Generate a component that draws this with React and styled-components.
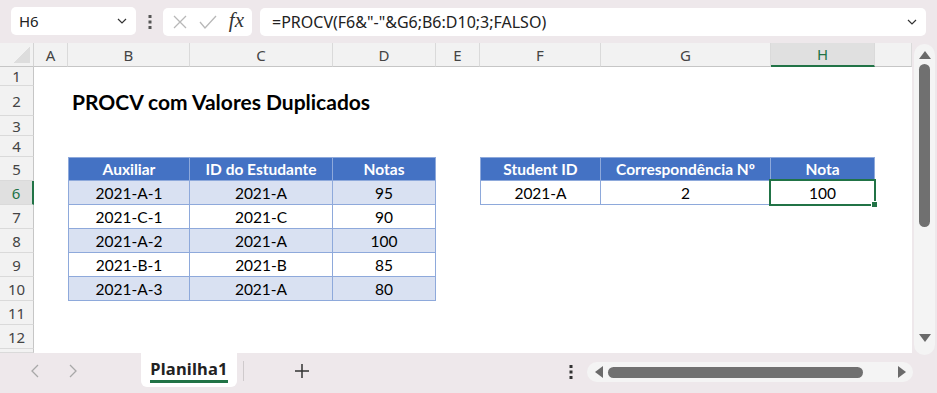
import React from 'react';
import styled, { createGlobalStyle, css } from 'styled-components';

const GlobalStyle = createGlobalStyle`
  html, body {
    margin: 0;
    padding: 0;
    overflow: hidden;
    background: #eee8eb;
  }
`;

const UI_FONT = `'Noto Sans', 'Open Sans', sans-serif`;
const CELL_FONT = `Lato, 'Liberation Sans', sans-serif`;
const GREEN = '#217346';
const BLUE = '#4472c4';
const BAND = '#d9e1f2';
const LINE = '#8ea9db';

const Window = styled.div`
  width: 937px;
  height: 393px;
  display: flex;
  flex-direction: column;
  background: #eee8eb;
`;

const TopBar = styled.div`
  height: 43px;
  display: flex;
  align-items: center;
  padding: 0 11px;
  box-sizing: border-box;
`;

const Box = styled.div`
  height: 28px;
  background: #fff;
  border-radius: 5px;
  box-sizing: border-box;
  display: flex;
  align-items: center;
  font-family: ${UI_FONT};
  font-size: 15px;
  color: #222;
`;

const NameBox = styled(Box)`
  width: 125px;
  padding: 0 8px 0 8px;
  justify-content: space-between;
  margin-bottom: 1px;
`;

const Dots = styled.div`
  width: 27px;
  display: flex;
  justify-content: center;
`;

const FxBox = styled(Box)`
  width: 89px;
  padding: 0 8px 0 9px;
  justify-content: space-between;
  margin-right: 8px;
`;

const Fx = styled.span`
  font-family: 'Liberation Serif', serif;
  font-style: italic;
  font-size: 21px;
  color: #333;
  margin-top: -3px;
`;

const FormulaBox = styled(Box)`
  flex: 1;
  padding: 0 8px 0 12px;
  justify-content: space-between;
  font-size: 16px;
`;

const Middle = styled.div`
  height: 310px;
  display: flex;
`;

const Sheet = styled.div`
  width: 912px;
  height: 310px;
  background: #fff;
  display: grid;
  grid-template-columns: 34px 34px 122px 143px 103px 44px 121px 170px 104px 1fr;
  grid-template-rows: 24px 19px 30px 20px 21px repeat(8, 24px) 1fr;
  overflow: hidden;
`;

const Corner = styled.div`
  background: #f2f2f2 linear-gradient(135deg, transparent 55%, #dddddd 55%) no-repeat right 3px bottom 3px / 18px 18px;
  border-right: 1px solid #d4d4d4;
  border-bottom: 1px solid #c6c6c6;
`;

const ColHead = styled.div`
  display: flex;
  align-items: center;
  justify-content: center;
  font-family: ${UI_FONT};
  font-size: 15px;
  background: ${p => (p.$active ? '#e0e0e0' : '#f2f2f2')};
  color: ${p => (p.$active ? GREEN : '#444')};
  border-right: 1px solid #dadada;
  border-bottom: ${p => (p.$active ? `2px solid ${GREEN}` : '1px solid #c6c6c6')};
  box-sizing: border-box;
`;

const RowHead = styled.div`
  display: flex;
  align-items: center;
  justify-content: center;
  font-family: ${UI_FONT};
  font-size: 15px;
  background: ${p => (p.$active ? '#e0e0e0' : '#f2f2f2')};
  color: ${p => (p.$active ? GREEN : '#444')};
  border-bottom: 1px solid #dadada;
  border-right: ${p => (p.$active ? `2px solid ${GREEN}` : '1px solid #c6c6c6')};
  box-sizing: border-box;
`;

const Cell = styled.div`
  position: relative;
  display: flex;
  align-items: center;
  justify-content: center;
  white-space: nowrap;
  box-sizing: border-box;
  font-family: ${CELL_FONT};
  font-size: 15.5px;
  color: #000;
  background: ${p => p.$fill || 'transparent'};
  ${p => p.$head && css`
    color: #fff;
    font-weight: 700;
  `}
  ${p => p.$boxed && css`
    border-right: 1px solid ${LINE};
    border-bottom: 1px solid ${LINE};
  `}
  ${p => p.$left && css`border-left: 1px solid ${LINE};`}
  ${p => p.$top && css`border-top: 1px solid ${LINE};`}
`;

const Title = styled(Cell)`
  justify-content: flex-start;
  padding-left: 4px;
  font-size: 21px;
  font-weight: 700;
  overflow: visible;
  z-index: 1;
`;

const Selection = styled.span`
  position: absolute;
  inset: -2px;
  border: 2px solid ${GREEN};
  pointer-events: none;

  &::after {
    content: '';
    position: absolute;
    right: -4px;
    bottom: -4px;
    width: 5px;
    height: 5px;
    background: ${GREEN};
    border: 1px solid #fff;
  }
`;

const VScroll = styled.div`
  flex: 1;
  padding: 1px 2px 0 2px;
  display: flex;
`;

const VTrack = styled.div`
  flex: 1;
  margin-bottom: -2px;
  background: #f4f4f4;
  border-radius: 11px;
  display: flex;
  flex-direction: column;
  align-items: center;
  padding-top: 6px;
  box-sizing: border-box;
`;

const VThumb = styled.div`
  width: 11px;
  height: 163px;
  margin-top: 4px;
  background: #707070;
  border-radius: 6px;
`;

const VDown = styled.div`
  margin-top: auto;
  margin-bottom: 8px;
`;

const BottomBar = styled.div`
  flex: 1;
  display: flex;
  align-items: flex-start;
  font-family: ${UI_FONT};
`;

const Nav = styled.div`
  width: 141px;
  height: 35px;
  display: flex;
  align-items: center;
  padding-left: 30px;
  gap: 28px;
  box-sizing: border-box;
`;

const Tab = styled.div`
  width: 96px;
  height: 34px;
  background: #fff;
  border-radius: 0 0 6px 6px;
  display: flex;
  flex-direction: column;
  align-items: center;
  justify-content: center;
  box-sizing: border-box;
  padding-top: 2px;
`;

const TabLabel = styled.span`
  font-family: ${UI_FONT};
  font-size: 16.5px;
  font-weight: 700;
  letter-spacing: 0.2px;
  color: #222;
  padding: 0 0 2px;
  border-bottom: 3px solid ${GREEN};
  line-height: 19px;
`;

const TabSep = styled.div`
  width: 1px;
  height: 20px;
  margin: 8px 0 0 6px;
  background: #cfcacc;
`;

const AddSheet = styled.div`
  margin: 9px 0 0 50px;
`;

const HArea = styled.div`
  margin-left: auto;
  margin-right: 24px;
  margin-top: 9px;
  display: flex;
  align-items: center;
`;

const HTrack = styled.div`
  width: 326px;
  height: 20px;
  margin-left: 14px;
  background: #f4f4f4;
  border-radius: 10px;
  display: flex;
  align-items: center;
  padding: 0 6px 0 7px;
  box-sizing: border-box;
`;

const HThumb = styled.div`
  width: 255px;
  height: 11px;
  margin-left: 4px;
  background: #707070;
  border-radius: 6px;
`;

const HRight = styled.span`
  margin-left: auto;
  display: flex;
`;

const Chevron = ({ size = 12 }) => (
  <svg width={size} height={size} viewBox="0 0 12 12">
    <polyline points="2,4 6,8 10,4" fill="none" stroke="#333" strokeWidth="1.2" />
  </svg>
);

const VDots = ({ color = '#444' }) => (
  <svg width="4" height="14" viewBox="0 0 4 14">
    <rect x="0.5" y="0" width="3" height="3" fill={color} />
    <rect x="0.5" y="5.5" width="3" height="3" fill={color} />
    <rect x="0.5" y="11" width="3" height="3" fill={color} />
  </svg>
);

const Tri = ({ dir }) => {
  const pts = {
    up: '0,9 6,1 12,9',
    down: '0,1 6,9 12,1',
    left: '9,0 1,6 9,12',
    right: '1,0 9,6 1,12',
  }[dir];
  const vert = dir === 'up' || dir === 'down';
  return (
    <svg width={vert ? 12 : 10} height={vert ? 10 : 12} viewBox={vert ? '0 0 12 10' : '0 0 10 12'}>
      <polygon points={pts} fill="#6a6a6a" />
    </svg>
  );
};

const cols = ['A', 'B', 'C', 'D', 'E', 'F', 'G', 'H', ''];
const rows = [1, 2, 3, 4, 5, 6, 7, 8, 9, 10, 11, 12];

const table1 = [
  ['Auxiliar', 'ID do Estudante', 'Notas'],
  ['2021-A-1', '2021-A', '95'],
  ['2021-C-1', '2021-C', '90'],
  ['2021-A-2', '2021-A', '100'],
  ['2021-B-1', '2021-B', '85'],
  ['2021-A-3', '2021-A', '80'],
];

const table2 = [
  ['Student ID', 'Correspondência Nº', 'Nota'],
  ['2021-A', '2', '100'],
];

function renderCell(r, c) {
  const key = `${r}-${c}`;
  if (r === 2 && c === 1) {
    return <Title key={key}>PROCV com Valores Duplicados</Title>;
  }
  if (r >= 5 && r <= 10 && c >= 1 && c <= 3) {
    const i = r - 5;
    const head = i === 0;
    const fill = head ? BLUE : i % 2 === 1 ? BAND : '#fff';
    return (
      <Cell key={key} $boxed $head={head} $fill={fill} $left={c === 1} $top={head}>
        {table1[i][c - 1]}
      </Cell>
    );
  }
  if (r >= 5 && r <= 6 && c >= 5 && c <= 7) {
    const i = r - 5;
    const head = i === 0;
    return (
      <Cell key={key} $boxed $head={head} $fill={head ? BLUE : '#fff'} $left={c === 5} $top={head}>
        {table2[i][c - 5]}
        {r === 6 && c === 7 && <Selection />}
      </Cell>
    );
  }
  return <Cell key={key} />;
}

export default function App() {
  return (
    <Window>
      <GlobalStyle />
      <TopBar>
        <NameBox>
          <span>H6</span>
          <Chevron />
        </NameBox>
        <Dots>
          <VDots color="#555" />
        </Dots>
        <FxBox>
          <svg width="16" height="16" viewBox="0 0 16 16">
            <path d="M2 2 L14 14 M14 2 L2 14" stroke="#b8b8b8" strokeWidth="1.3" fill="none" />
          </svg>
          <svg width="18" height="16" viewBox="0 0 18 16">
            <polyline points="1,8 6,14 17,2" stroke="#b8b8b8" strokeWidth="1.3" fill="none" />
          </svg>
          <Fx>fx</Fx>
        </FxBox>
        <FormulaBox>
          <span>=PROCV(F6&amp;"-"&amp;G6;B6:D10;3;FALSO)</span>
          <Chevron />
        </FormulaBox>
      </TopBar>

      <Middle>
        <Sheet>
          <Corner />
          {cols.map((c, i) => (
            <ColHead key={`h${i}`} $active={c === 'H'}>{c}</ColHead>
          ))}
          {rows.map(r => (
            <React.Fragment key={r}>
              <RowHead $active={r === 6}>{r}</RowHead>
              {cols.map((_, c) => renderCell(r, c))}
            </React.Fragment>
          ))}
          <RowHead />
        </Sheet>
        <VScroll>
          <VTrack>
            <Tri dir="up" />
            <VThumb />
            <VDown>
              <Tri dir="down" />
            </VDown>
          </VTrack>
        </VScroll>
      </Middle>

      <BottomBar>
        <Nav>
          <svg width="10" height="14" viewBox="0 0 10 14">
            <polyline points="8,1 2,7 8,13" fill="none" stroke="#a8a8a8" strokeWidth="1.3" />
          </svg>
          <svg width="10" height="14" viewBox="0 0 10 14">
            <polyline points="2,1 8,7 2,13" fill="none" stroke="#a8a8a8" strokeWidth="1.3" />
          </svg>
        </Nav>
        <Tab>
          <TabLabel>Planilha1</TabLabel>
        </Tab>
        <TabSep />
        <AddSheet>
          <svg width="16" height="16" viewBox="0 0 16 16">
            <path d="M8 1 V15 M1 8 H15" stroke="#333" strokeWidth="1.5" fill="none" />
          </svg>
        </AddSheet>
        <HArea>
          <VDots color="#333" />
          <HTrack>
            <Tri dir="left" />
            <HThumb />
            <HRight>
              <Tri dir="right" />
            </HRight>
          </HTrack>
        </HArea>
      </BottomBar>
    </Window>
  );
}
